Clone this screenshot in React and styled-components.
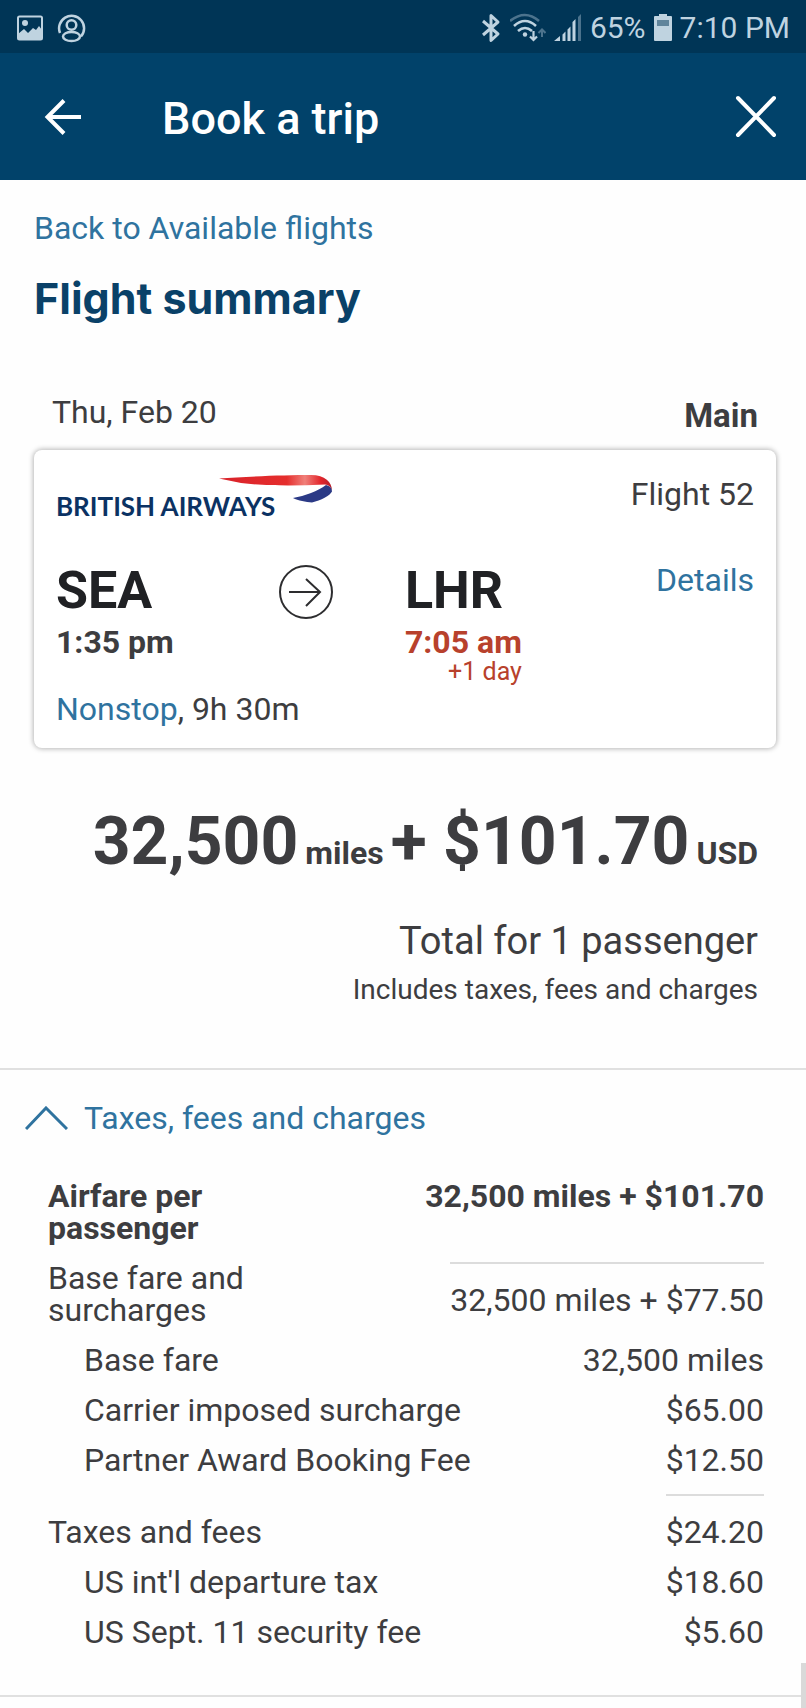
import styled, { createGlobalStyle } from "styled-components";

const GlobalStyle = createGlobalStyle`
    * {
        box-sizing: border-box;
    }

    body {
        margin: 0;
        background: #fefefe;
        color: #3d3d40;
        font-family: Roboto, "Liberation Sans", sans-serif;
        font-size: 32px;
        line-height: 32px;
    }

    h1, h2, p {
        margin: 0;
    }

    svg {
        display: block;
        flex: none;
    }
`;

const Page = styled.div`
    overflow: hidden;
`;

const StatusBar = styled.div`
    display: flex;
    align-items: center;
    justify-content: space-between;
    padding: 12px 16px 9px;
    background: #003556;
    color: #bfd3e0;
    font-size: 30px;
`;

const StatusGroup = styled.div`
    display: flex;
    align-items: center;
    gap: ${(props) => props.$gap}px;
`;

const AppBar = styled.header`
    display: flex;
    align-items: center;
    padding: 38px 28px 37px 44px;
    background: #01426a;
    color: #fff;
`;

const IconButton = styled.button`
    display: flex;
    padding: 0;
    border: 0;
    background: none;
    color: inherit;
    cursor: pointer;
`;

const Title = styled.h1`
    flex: 1;
    margin-left: 80px;
    padding-top: 4px;
    font-size: 45px;
    font-weight: 500;
    line-height: 48px;
`;

const Summary = styled.section`
    padding: 32px 30px 62px 34px;
    border-bottom: 2px solid #e0e0e0;
`;

const Link = styled.a`
    color: #2f739f;
    text-decoration: none;
`;

const Heading = styled.h2`
    margin-top: 30px;
    color: #0a4168;
    font-family: Inter, sans-serif;
    font-size: 43px;
    font-weight: 700;
    line-height: 48px;
`;

const LegHeader = styled.div`
    display: flex;
    justify-content: space-between;
    margin: 74px 18px 14px;
`;

const Cabin = styled.strong`
    font-size: 33px;
    line-height: 40px;
`;

const Card = styled.article`
    padding: 17px 22px 23px;
    border-radius: 8px;
    background: #fff;
    box-shadow: 0 0 5px 1px rgba(0, 0, 0, 0.28);
`;

const CarrierRow = styled.div`
    display: flex;
    align-items: center;
    justify-content: space-between;
`;

const Route = styled.div`
    display: grid;
    grid-template-columns: 32% 18% auto 1fr;
    margin: 39px 0 7px;

    > svg {
        margin-top: 5px;
    }

    ${Link} {
        justify-self: end;
        line-height: 40px;
    }
`;

const Airport = styled.div`
    display: flex;
    flex-direction: column;
    color: ${(props) => (props.$late ? "#b8412c" : "inherit")};
`;

const Code = styled.strong`
    margin-bottom: 4px;
    color: #202124;
    font-size: 52px;
    line-height: 62px;
`;

const NextDay = styled.span`
    align-self: flex-end;
    font-size: 25px;
    line-height: 28px;
`;

const Totals = styled.div`
    margin: 58px 18px 0;
    text-align: right;
`;

const Price = styled.p`
    display: flex;
    align-items: baseline;
    justify-content: flex-end;
    gap: 7px;
    font-size: 66px;
    font-weight: 700;
    line-height: 72px;
    white-space: pre;

    small {
        font-size: 32px;
        line-height: 32px;
    }
`;

const Passengers = styled.p`
    margin: 43px 0 13px;
    font-size: 38px;
    line-height: 40px;
`;

const Includes = styled.p`
    font-size: 28px;
`;

const Charges = styled.section`
    padding: 32px 42px 38px 25px;
    border-bottom: 2px solid #e0e0e0;
`;

const Toggle = styled.button`
    display: flex;
    align-items: center;
    gap: 16px;
    padding: 0;
    border: 0;
    background: none;
    color: #2f739f;
    font: inherit;
    cursor: pointer;
`;

const FareTable = styled.table`
    display: block;
    margin: 37px 0 0 23px;

    tbody {
        display: block;
    }
`;

const FareRow = styled.tr`
    display: flex;
    justify-content: space-between;
    padding: 9px 0;
    font-weight: ${(props) => (props.$bold ? 700 : 400)};
`;

const Label = styled.th`
    align-self: flex-end;
    max-width: ${(props) => (props.$indent ? "none" : "240px")};
    padding: 0 0 0 ${(props) => (props.$indent ? 36 : 0)}px;
    font-weight: inherit;
    text-align: left;
`;

const Amount = styled.td`
    align-self: flex-start;
    padding: ${(props) => (props.$ruled ? "20px 0 0" : "0")};
    border-top: ${(props) => (props.$ruled ? "2px solid #dcdcdc" : "0")};
    white-space: nowrap;
`;

const ScrollThumb = styled.div`
    position: fixed;
    right: 0;
    bottom: 0;
    width: 5px;
    height: 45px;
    background: #d9d9d9;
`;

const PictureIcon = () => (
    <svg width="28" height="28" viewBox="0 0 28 28">
        <rect x="2" y="2.5" width="24" height="23" rx="1.5" fill="none" stroke="currentColor" strokeWidth="2" />
        <circle cx="9" cy="9" r="3" fill="currentColor" />
        <path d="M2 20l6-5 4 4 5-5 3 2 3-4 3 4v10H2z" fill="currentColor" />
    </svg>
);

const ProfileIcon = () => (
    <svg width="29" height="29" viewBox="0 0 29 29" fill="none" stroke="currentColor" strokeWidth="2.5">
        <path d="M3 19A12.5 12.5 0 1 1 24 22.5" />
        <circle cx="14.5" cy="11" r="4.8" />
        <ellipse cx="14.5" cy="22.5" rx="8.5" ry="4.6" />
    </svg>
);

const BluetoothIcon = () => (
    <svg width="20" height="30" viewBox="0 0 20 30" fill="none" stroke="currentColor" strokeWidth="3">
        <path d="M1 8l15 13-7 6.5v-25L16 9 1 22" strokeLinejoin="round" />
    </svg>
);

const WifiIcon = () => (
    <svg width="36" height="30" viewBox="0 0 36 30" fill="none" stroke="currentColor" strokeWidth="2.6">
        <path d="M0 8Q15-4 29 8" opacity=".4" />
        <path d="M4 13Q15 3 26 13M8 18Q15 12 22 18" />
        <circle cx="15" cy="21.5" r="2.2" fill="currentColor" stroke="none" />
        <path d="M23.5 18v8M20 23.5l3.5 3.5 3.5-3.5" strokeWidth="2.2" />
        <path d="M32 24v-7M28.5 20l3.5-3.5 3.5 3.5" strokeWidth="2" opacity=".4" />
    </svg>
);

const SignalIcon = () => (
    <svg width="28" height="30" viewBox="0 0 28 30" fill="currentColor">
        <path d="M0 28l6-5v5zM8.5 21.5l3-3V28h-3zM13.5 16.5l3-3V28h-3zM18.5 9l3-3v22h-3z" />
        <path d="M24 4l3-3v27h-3z" opacity=".4" />
    </svg>
);

const BatteryIcon = () => (
    <svg width="18" height="30" viewBox="0 0 18 30" fill="currentColor">
        <path d="M5 1h8v2H5zM1 3h16a1 1 0 0 1 1 1v3H0V4a1 1 0 0 1 1-1zM0 13h18v14a1 1 0 0 1-1 1H1a1 1 0 0 1-1-1z" />
        <path d="M0 7h3v6H0zM15 7h3v6h-3z" />
        <path d="M3 7h12v6H3z" opacity=".5" />
    </svg>
);

const BackIcon = () => (
    <svg width="38" height="38" viewBox="0 0 38 38" fill="none" stroke="currentColor" strokeWidth="4">
        <path d="M37 19H4M20 2.5L3.5 19 20 35.5" />
    </svg>
);

const CloseIcon = () => (
    <svg width="44" height="44" viewBox="0 0 44 44" fill="none" stroke="currentColor" strokeWidth="4">
        <path d="M4 3l36 37M40 3L4 40" strokeLinecap="round" />
    </svg>
);

const ArrowIcon = () => (
    <svg width="54" height="54" viewBox="0 0 54 54" fill="none" stroke="#2d2d2f" strokeWidth="2">
        <circle cx="27" cy="27" r="26" />
        <path d="M10 27h31M27 14l14 13-14 14" />
    </svg>
);

const ChevronIcon = () => (
    <svg width="43" height="24" viewBox="0 0 43 24" fill="none" stroke="currentColor" strokeWidth="3">
        <path d="M1 23L21 2l21 21" />
    </svg>
);

const BritishAirwaysLogo = () => (
    <svg width="278" height="54" viewBox="0 -5 278 54" role="img" aria-label="British Airways">
        <defs>
            <linearGradient id="ribbon">
                <stop offset="0" stopColor="#d9222a" />
                <stop offset=".6" stopColor="#e52e2d" />
                <stop offset=".76" stopColor="#f0807a" />
                <stop offset=".9" stopColor="#e2262c" />
                <stop offset="1" stopColor="#b3202c" />
            </linearGradient>
        </defs>
        <path d="M163 6.5C190 4.5 230 3 255 3c14 0 21 7 21 16-1-4-3-6-7-6.5-30 1.5-60 1.5-84-1.5z" fill="url(#ribbon)" />
        <path d="M270 13c4 1 6 3 6 6.5-2 4-11 9-20 11-6-.5-14-2-19-4.5 12-2 25-7 33-13z" fill="#2b3a86" />
        <text x="0" y="44" fill="#0b3263" fontFamily="Lato, sans-serif" fontSize="26" fontWeight="700">
            BRITISH AIRWAYS
        </text>
    </svg>
);

const fares = [
    { label: "Airfare per passenger", amount: "32,500 miles + $101.70", bold: true },
    { label: "Base fare and surcharges", amount: "32,500 miles + $77.50", ruled: true },
    { label: "Base fare", amount: "32,500 miles", indent: true },
    { label: "Carrier imposed surcharge", amount: "$65.00", indent: true },
    { label: "Partner Award Booking Fee", amount: "$12.50", indent: true },
    { label: "Taxes and fees", amount: "$24.20", ruled: true },
    { label: "US int'l departure tax", amount: "$18.60", indent: true },
    { label: "US Sept. 11 security fee", amount: "$5.60", indent: true },
];

const App = () => {
    return (
        <Page>
            <GlobalStyle />
            <StatusBar>
                <StatusGroup $gap={13}>
                    <PictureIcon />
                    <ProfileIcon />
                </StatusGroup>
                <StatusGroup $gap={8}>
                    <BluetoothIcon />
                    <WifiIcon />
                    <SignalIcon />
                    <span>65%</span>
                    <BatteryIcon />
                    <span>7:10 PM</span>
                </StatusGroup>
            </StatusBar>
            <AppBar>
                <IconButton aria-label="Back">
                    <BackIcon />
                </IconButton>
                <Title>Book a trip</Title>
                <IconButton aria-label="Close">
                    <CloseIcon />
                </IconButton>
            </AppBar>
            <main>
                <Summary>
                    <Link href="#flights">Back to Available flights</Link>
                    <Heading>Flight summary</Heading>
                    <LegHeader>
                        <span>Thu, Feb 20</span>
                        <Cabin>Main</Cabin>
                    </LegHeader>
                    <Card>
                        <CarrierRow>
                            <BritishAirwaysLogo />
                            <span>Flight 52</span>
                        </CarrierRow>
                        <Route>
                            <Airport>
                                <Code>SEA</Code>
                                <strong>1:35 pm</strong>
                            </Airport>
                            <ArrowIcon />
                            <Airport $late>
                                <Code>LHR</Code>
                                <strong>7:05 am</strong>
                                <NextDay>+1 day</NextDay>
                            </Airport>
                            <Link href="#details">Details</Link>
                        </Route>
                        <p>
                            <Link href="#nonstop">Nonstop</Link>, 9h 30m
                        </p>
                    </Card>
                    <Totals>
                        <Price>
                            <span>32,500</span>
                            <small>miles</small>
                            <span>+ $101.70</span>
                            <small>USD</small>
                        </Price>
                        <Passengers>Total for 1 passenger</Passengers>
                        <Includes>Includes taxes, fees and charges</Includes>
                    </Totals>
                </Summary>
                <Charges>
                    <Toggle aria-expanded="true">
                        <ChevronIcon />
                        Taxes, fees and charges
                    </Toggle>
                    <FareTable>
                        <tbody>
                            {fares.map((fare) => (
                                <FareRow key={fare.label} $bold={fare.bold}>
                                    <Label scope="row" $indent={fare.indent}>
                                        {fare.label}
                                    </Label>
                                    <Amount $ruled={fare.ruled}>{fare.amount}</Amount>
                                </FareRow>
                            ))}
                        </tbody>
                    </FareTable>
                </Charges>
            </main>
            <ScrollThumb />
        </Page>
    );
};

export default App;
